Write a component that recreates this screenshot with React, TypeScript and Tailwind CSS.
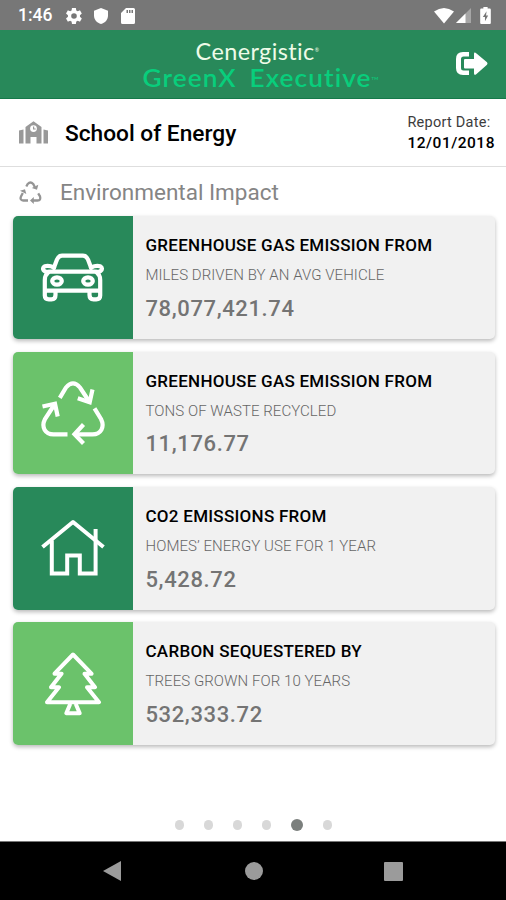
import type { ReactNode } from "react";

interface ImpactCardProps {
  icon: ReactNode;
  tileClass: string;
  title: string;
  subtitle: string;
  value: string;
}

function CarIcon() {
  return (
    <svg viewBox="0 0 64 64" className="size-16" fill="none" stroke="currentColor" strokeWidth="4.2" strokeLinecap="round" strokeLinejoin="round">
      <path d="M13 21.5 16 13.5Q17.600 9.700 21 9.700H42Q45.400 9.700 47 13.500L50 21.500" />
      <path d="M13 21.500Q8 19.200 3.800 20.300 .4 22.600 3.500 25Q5.500 26.400 9 25.600H54Q57.500 26.400 59.500 25 62.600 22.600 59.200 20.300 55 19.200 50 21.500" />
      <path d="M7.500 26Q3.800 29 3.800 34V49.500Q3.800 53.300 7.800 53.300H10.500Q14.500 53.300 14.500 49V45M55.500 26Q59.200 29 59.200 34V49.500Q59.200 53.300 55.200 53.300H52.500Q48.500 53.300 48.500 49V45M3.800 44.600H59.200" />
      <ellipse cx="16" cy="35" rx="4.800" ry="3.700" />
      <ellipse cx="47" cy="35" rx="4.800" ry="3.700" />
    </svg>
  );
}

function RecycleIcon() {
  return (
    <svg viewBox="0 0 64 64" className="size-16" fill="none" stroke="currentColor" strokeWidth="4.2">
      <path d="M18.800 16.800 25 6.500Q32-1.800 39 6.500L48.500 21" />
      <path d="M36.800 17.300 48.700 21.200 51.500 8.500" />
      <path d="M53.500 27.300 60 38C64 46 60 53.300 51.500 53.300H34" />
      <path d="M42.500 43.500 33.500 53.300 42.500 62.500" />
      <path d="M26.500 53.300H12.500C4 53.300 0 46 4 38L13.500 23.500" />
      <path d="M1.500 25.500 14 22.800 16.700 35.500" />
    </svg>
  );
}

// Solid-headed variant used beside the section title
function RecycleSmallIcon() {
  return (
    <svg viewBox="0 0 23 23" className="size-[23px]" fill="none" stroke="currentColor" strokeWidth="2.3">
      <path d="M7.300 5.500 8.700 3Q11.500 0 14.200 3L15.800 6" />
      <path d="M19.200 12.300 21 15.300Q22.300 19.300 18.500 19.500H14" />
      <path d="M9 19.500H4.300Q.5 19 2 15.500L3.800 12" />
      <path d="M12.800 7 18 8.800 19.300 3.800ZM14.800 16V23L11 19.500ZM1 9.800 6 8.200 7.300 13Z" fill="currentColor" stroke="none" />
    </svg>
  );
}

function HomeIcon() {
  return (
    <svg viewBox="0 0 64 64" className="size-16" fill="none" stroke="currentColor" strokeWidth="4">
      <path d="M1.500 31 32 6 62.500 31" strokeLinejoin="round" />
      <path d="M10.800 24.500V57.500H26.200V39.500H38.800V57.500H54.600V13" />
    </svg>
  );
}

function TreeIcon() {
  return (
    <svg viewBox="0 0 64 64" className="size-16" fill="none" stroke="currentColor" strokeWidth="4" strokeLinejoin="round">
      <path d="M32 2.500 50.500 21.700H43.500L54 35.200H46L58 50.200H6L18 35.200H10L20.500 21.700H13.500Z" />
      <path d="M28.800 50.200V53L25.300 61.200H38.700L35.200 53V50.200" />
    </svg>
  );
}

function SchoolIcon() {
  return (
    <svg viewBox="0 0 29 24" className="h-6 w-[29px]" fill="currentColor">
      <path d="M0 9.500 4.500 8.500V22.500H0ZM24.500 8.500 29 9.500V22.500H24.500Z" />
      <path
        fillRule="evenodd"
        d="M6.500 22.500V6L14.500.300 22.500 6V22.500H17.500V16H11.500V22.500ZM14.500 4.200A3.400 3.400 0 1 0 14.500 11 3.400 3.400 0 1 0 14.500 4.200Z"
      />
      <path d="M14 5.500H15.200V7.500H16.700V8.600H14Z" />
    </svg>
  );
}

function StatusBar() {
  return (
    <div className="flex h-[30px] items-center justify-between bg-[#777777] pt-[1px] pr-[15px] pl-[18px] text-white">
      <div className="flex items-center">
        <span className="w-[48px] text-[17.500px] font-medium">1:46</span>
        <svg viewBox="2 2 20 20" className="size-4" fill="currentColor">
          <path
            fillRule="evenodd"
            d="M19.400 13q.1-.5.1-1t-.1-1l2.100-1.700c.2-.1.200-.4.100-.6l-2-3.500c-.1-.2-.4-.3-.6-.2l-2.500 1q-.8-.6-1.700-1L14.400 2.400c0-.2-.2-.4-.5-.4h-4c-.2 0-.4.2-.5.4L9 5q-.9.400-1.700 1l-2.500-1c-.2-.1-.5 0-.6.200l-2 3.500c-.1.200-.1.500.1.600L4.500 11q-.1.500-.1 1t.1 1l-2.200 1.700c-.2.100-.2.400-.1.600l2 3.500c.1.200.4.300.6.200l2.500-1q.8.600 1.700 1l.4 2.600c.1.200.300.400.5.400h4c.3 0 .5-.2.500-.4L14.800 19q.9-.4 1.700-1l2.500 1c.2.100.5 0 .6-.2l2-3.500c.1-.2.1-.5-.1-.6ZM12 15.500a3.500 3.500 0 1 1 0-7 3.500 3.500 0 0 1 0 7Z"
          />
        </svg>
        <svg viewBox="0 0 14 16" className="ml-3 h-4 w-[14px]" fill="currentColor">
          <path d="M7 0 14 2.700V7.500C14 11.500 11 15 7 16 3 15 0 11.500 0 7.500V2.700Z" />
        </svg>
        <svg viewBox="0 0 14 16" className="ml-[13px] h-4 w-[14px]" fill="currentColor">
          <path fillRule="evenodd" d="M5 0H12.500Q14 0 14 1.500V14.500Q14 16 12.500 16H1.500Q0 16 0 14.500V5ZM5.500 2V5H7V2ZM8 2V5H9.500V2ZM10.500 2V5H12V2Z" />
        </svg>
      </div>
      <div className="flex items-center">
        <svg viewBox="0 0 20 16" className="h-4 w-5" fill="currentColor">
          <path d="M0 3.500Q10-3.500 20 3.500L10 15.500Z" />
        </svg>
        <svg viewBox="0 0 15 15" className="ml-[2px] size-[15px]" fill="currentColor">
          <path d="M15 0V15H0Z" opacity=".35" />
          <path d="M9.500 5.500V15H0Z" />
        </svg>
        <svg viewBox="0 0 10 16" className="ml-[9px] h-[17px] w-[11px]" fill="currentColor">
          <path fillRule="evenodd" d="M3 0H7V1.500H9Q10 1.500 10 2.500V15Q10 16 9 16H1Q0 16 0 15V2.500Q0 1.500 1 1.500H3ZM6 4 2.500 9.500H4.500V13.500L7.500 8H5.500Z" />
        </svg>
      </div>
    </div>
  );
}

function Header() {
  return (
    <header className="grid h-[69px] grid-cols-[90px_1fr_90px] items-center border-b border-[#15794a] bg-[#28895a]">
      <div />
      <div className="flex flex-col items-center pt-[4px] pl-[10px] font-[Lato,sans-serif] whitespace-nowrap">
        <div className="flex h-[24px] scale-x-[1.04] items-center text-[22.500px] tracking-[0.400px] text-[#eefbe8]">
          Cenergistic<sup className="text-[5px]">®</sup>
        </div>
        <div className="flex h-[28px] scale-x-[1.090] items-center pl-[4px] text-[24px] font-semibold tracking-[1px] text-[#08ce7c] [word-spacing:5px]">
          GreenX Executive<sub className="text-[4px] tracking-normal">TM</sub>
        </div>
      </div>
      <button aria-label="Sign out" className="ml-[40px] w-8 text-white">
        <svg viewBox="0 0 32 26" className="h-[26px] w-8" fill="currentColor">
          <path d="M13 1H7Q0 1 0 8V17Q0 24 7 24H13V19.500H7.500Q5 19.500 5 17V8Q5 5.500 7.500 5.500H13Z" />
          <path d="M9 8H18V3Q18 .5 20.500 2.500L31 11.200Q32 12.500 31 13.700L20.500 23Q18 25 18 22.300V17.500H9Q8 17.500 8 16.500V9Q8 8 9 8Z" />
        </svg>
      </button>
    </header>
  );
}

function ImpactCard({ icon, tileClass, title, subtitle, value }: ImpactCardProps) {
  return (
    <div className="flex h-[122.500px] overflow-hidden rounded-[5px] bg-[#f1f1f1] shadow-[0_2px_4px_rgba(0,0,0,0.280)]">
      <div className={`flex w-[120px] shrink-0 items-center justify-center text-white ${tileClass}`}>
        {icon}
      </div>
      <div className="pt-[17px] pl-[13px] whitespace-nowrap">
        <div className="h-[28px] text-[17px] leading-[24px] font-medium tracking-[0.270px] text-black">{title}</div>
        <div className="h-[30.500px] text-[15px] leading-[28px] font-light tracking-[0.060px] text-[#666666]">{subtitle}</div>
        <div className="text-[22px] leading-[34px] font-medium tracking-[0.620px] text-[#747474]">{value}</div>
      </div>
    </div>
  );
}

const pages = [0, 1, 2, 3, 4, 5];
const activePage = 4;

export default function App() {
  return (
    <div className="flex h-[900px] w-[506px] flex-col overflow-hidden bg-white font-[Roboto,sans-serif]">
      <StatusBar />
      <Header />

      <div className="flex h-[68px] shrink-0 items-center border-b border-[#dedede] pt-[1px] pr-[11px] pl-[19px]">
        <span className="text-[#999999]">
          <SchoolIcon />
        </span>
        <h1 className="ml-[17px] pt-[2px] text-[22.700px] font-medium text-black">School of Energy</h1>
        <div className="ml-auto whitespace-nowrap">
          <div className="text-[14.500px] leading-[21px] tracking-[0.250px] text-[#3c3c3c]">Report Date:</div>
          <div className="text-[15.500px] leading-[21px] font-medium tracking-[0.500px] text-black">12/01/2018</div>
        </div>
      </div>

      <div className="flex h-[49.300px] shrink-0 items-center pt-[2px] pl-[19px] text-[#959595]">
        <RecycleSmallIcon />
        <h2 className="ml-[18px] text-[22.500px] text-[#858585]">Environmental Impact</h2>
      </div>

      <main className="flex flex-col gap-[12.900px] pr-[11px] pl-[12.500px]">
        <ImpactCard
          icon={<CarIcon />}
          tileClass="bg-[#28895a]"
          title="GREENHOUSE GAS EMISSION FROM"
          subtitle="MILES DRIVEN BY AN AVG VEHICLE"
          value="78,077,421.74"
        />
        <ImpactCard
          icon={<RecycleIcon />}
          tileClass="bg-[#6bc26b]"
          title="GREENHOUSE GAS EMISSION FROM"
          subtitle="TONS OF WASTE RECYCLED"
          value="11,176.77"
        />
        <ImpactCard
          icon={<HomeIcon />}
          tileClass="bg-[#28895a]"
          title="CO2 EMISSIONS FROM"
          subtitle="HOMES’ ENERGY USE FOR 1 YEAR"
          value="5,428.72"
        />
        <ImpactCard
          icon={<TreeIcon />}
          tileClass="bg-[#6bc26b]"
          title="CARBON SEQUESTERED BY"
          subtitle="TREES GROWN FOR 10 YEARS"
          value="532,333.72"
        />
      </main>

      <div className="mt-auto flex h-[32px] items-center justify-center gap-[19.500px] pl-[1px]">
        {pages.map((page) => (
          <span
            key={page}
            className={page === activePage ? "size-[12.500px] rounded-full bg-[#7b7f7d]" : "size-[9.500px] rounded-full bg-[#d8d8d8]"}
          />
        ))}
      </div>

      <nav className="flex h-[59px] shrink-0 items-center border-t border-[#777777] bg-black pl-[103px] text-[#9b9b9b]">
        <svg viewBox="0 0 18 20" className="h-5 w-[18px]" fill="currentColor">
          <path d="M18 0V20L0 10Z" />
        </svg>
        <span className="ml-[123.500px] size-[18px] rounded-full bg-[#9b9b9b]" />
        <span className="ml-[121px] size-[19px] rounded-[1px] bg-[#9b9b9b]" />
      </nav>
    </div>
  );
}
